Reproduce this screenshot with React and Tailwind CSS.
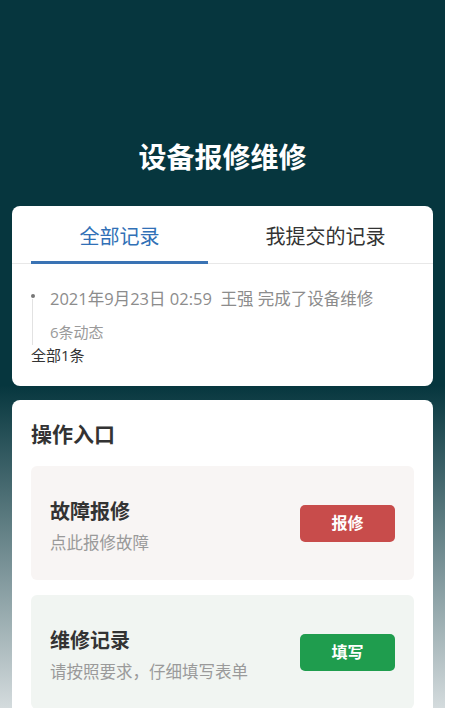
import React, { useState } from "react";

const font = "font-['Open_Sans','Noto_Sans_CJK_SC',sans-serif]";

// 时间线条目
const TimelineItem = ({ time, text }) => (
  <div className="relative pl-[19px]">
    <div className="absolute left-[0px] top-[7px] w-[4px] h-[4px] rounded-full bg-[#777]"></div>
    <div className="absolute left-[1px] top-[12px] bottom-[-1px] w-px bg-[#e2e2e2]"></div>
    <p className="text-[16.5px] leading-[24px] text-[#8c8c8c] whitespace-nowrap">
      {time}&nbsp;&nbsp;{text}
    </p>
    <p className="mt-[9px] text-[15px] leading-[24px] text-[#9a9a9a]">6条动态</p>
  </div>
);

// 操作入口卡片
const EntryCard = ({ title, desc, action, tone }) => {
  const bg = tone === "red" ? "bg-[#f8f5f4]" : "bg-[#f1f5f2]";
  const btn = tone === "red" ? "bg-[#c84c4b]" : "bg-[#1f9d4e]";
  return (
    <div className={`${bg} rounded-md h-[114px] px-[19px] flex items-center justify-between`}>
      <div className="pt-[7px]">
        <h3 className="text-[20px] leading-[28px] font-bold text-[#333]">{title}</h3>
        <p className="mt-[5px] text-[16.5px] leading-[24px] text-[#9a9a9a]">{desc}</p>
      </div>
      <button className={`${btn} w-[95px] h-[37px] rounded-[5px] text-white text-[16px] font-bold`}>
        {action}
      </button>
    </div>
  );
};

export default function App() {
  const [tab, setTab] = useState(0);
  const tabs = ["全部记录", "我提交的记录"];

  return (
    <div className={`${font} w-[452px] h-[708px] overflow-hidden bg-white`}>
      <div className="w-[445px] h-[708px] bg-[linear-gradient(to_bottom,#06363e_0px,#06363e_385px,#d4dbdd_708px)]">
        {/* Header */}
        <h1 className="pt-[137px] h-[206px] text-center text-[28px] leading-[40px] font-bold text-white">
          设备报修维修
        </h1>

        {/* 记录卡片 */}
        <div className="mx-3 bg-white rounded-lg">
          <div className="flex justify-between px-[19px] border-b border-[#e8e8e8]">
            {tabs.map((t, i) => (
              <button
                key={t}
                onClick={() => setTab(i)}
                className={`w-[177px] h-[58px] pt-[7px] text-[20px] leading-[28px] border-b-[3px] -mb-px ${
                  tab === i ? "text-[#3170b6] border-[#3a73b4]" : "text-[#333] border-transparent"
                }`}
              >
                {t}
              </button>
            ))}
          </div>
          <div className="pl-[19px] pr-4 pt-[23px] pb-[20px]">
            <TimelineItem time="2021年9月23日 02:59" text="王强 完成了设备维修" />
            <p className="text-[15px] leading-[22px] text-[#333]">全部1条</p>
          </div>
        </div>

        {/* 操作入口 */}
        <div className="mx-3 mt-[14px] bg-white rounded-lg px-[19px] pt-[20px] pb-6">
          <h2 className="text-[21px] leading-[28px] font-bold text-[#333]">操作入口</h2>
          <div className="mt-[18px] flex flex-col gap-[15px]">
            <EntryCard title="故障报修" desc="点此报修故障" action="报修" tone="red" />
            <EntryCard title="维修记录" desc="请按照要求，仔细填写表单" action="填写" tone="green" />
          </div>
        </div>
      </div>
    </div>
  );
}
